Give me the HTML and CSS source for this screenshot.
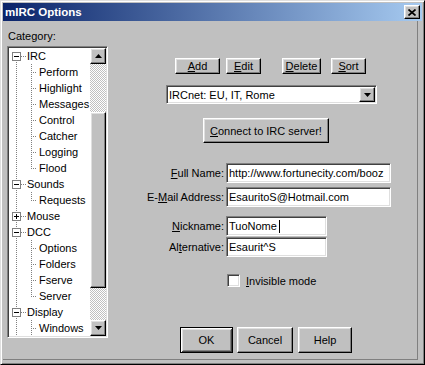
FILE: index.html
```html
<!DOCTYPE html>
<html lang="en">
<head>
    <meta charset="UTF-8">
    <title>mIRC Options</title>
    <link rel="stylesheet" href="styles.css">
</head>
<body>
<div class="window">
    <div class="titlebar">
        <span class="title">mIRC Options</span>
        <span class="close"><svg width="8" height="7" viewBox="0 0 8 7"><path d="M0.5 0.5l7 6M7.5 0.5l-7 6" stroke="#000" stroke-width="1.7"/></svg></span>
    </div>
    <div class="client">
        <div class="left">
            <div class="cat">Category:</div>
            <div class="tree">
                <ul class="nodes">
                    <li class="row root first"><span class="g1"><i class="box"></i></span>IRC</li>
                    <li class="row child"><span class="g1"></span><span class="g2"></span>Perform</li>
                    <li class="row child"><span class="g1"></span><span class="g2"></span>Highlight</li>
                    <li class="row child"><span class="g1"></span><span class="g2"></span>Messages</li>
                    <li class="row child"><span class="g1"></span><span class="g2"></span>Control</li>
                    <li class="row child"><span class="g1"></span><span class="g2"></span>Catcher</li>
                    <li class="row child"><span class="g1"></span><span class="g2"></span>Logging</li>
                    <li class="row child last"><span class="g1"></span><span class="g2"></span>Flood</li>
                    <li class="row root"><span class="g1"><i class="box"></i></span>Sounds</li>
                    <li class="row child last"><span class="g1"></span><span class="g2"></span>Requests</li>
                    <li class="row root"><span class="g1"><i class="box plus"></i></span>Mouse</li>
                    <li class="row root"><span class="g1"><i class="box"></i></span>DCC</li>
                    <li class="row child"><span class="g1"></span><span class="g2"></span>Options</li>
                    <li class="row child"><span class="g1"></span><span class="g2"></span>Folders</li>
                    <li class="row child"><span class="g1"></span><span class="g2"></span>Fserve</li>
                    <li class="row child last"><span class="g1"></span><span class="g2"></span>Server</li>
                    <li class="row root"><span class="g1"><i class="box"></i></span>Display</li>
                    <li class="row child"><span class="g1"></span><span class="g2"></span>Windows</li>
                </ul>
                <div class="vscroll">
                    <span class="sbtn"><svg width="7" height="4" viewBox="0 0 7 4"><path d="M3.5 0L7 4H0z"/></svg></span>
                    <span class="track top"></span>
                    <span class="thumb"></span>
                    <span class="track bottom"></span>
                    <span class="sbtn"><svg width="7" height="4" viewBox="0 0 7 4"><path d="M0 0h7L3.5 4z"/></svg></span>
                </div>
            </div>
        </div>

        <div class="right">
            <div class="btnrow">
                <span class="btn add"><u>A</u>dd</span>
                <span class="btn edit"><u>E</u>dit</span>
                <span class="btn delete"><u>D</u>elete</span>
                <span class="btn sort"><u>S</u>ort</span>
            </div>

            <div class="combo">
                <span class="combo-text">IRCnet: EU, IT, Rome</span>
                <span class="drop"><svg width="7" height="4" viewBox="0 0 7 4"><path d="M0 0h7L3.5 4z"/></svg></span>
            </div>

            <span class="btn connect"><u>C</u>onnect to IRC server!</span>

            <div class="field first">
                <span class="lbl"><u>F</u>ull Name:</span>
                <span class="input wide">http://www.fortunecity.com/booz</span>
            </div>
            <div class="field email">
                <span class="lbl">E-<u>M</u>ail Address:</span>
                <span class="input wide">EsauritoS@Hotmail.com</span>
            </div>
            <div class="field nick">
                <span class="lbl"><u>N</u>ickname:</span>
                <span class="input short">TuoNome<i class="caret"></i></span>
            </div>
            <div class="field alt">
                <span class="lbl">Al<u>t</u>ernative:</span>
                <span class="input short">Esaurit^S</span>
            </div>

            <div class="check">
                <span class="checkbox"></span>
                <span><u>I</u>nvisible mode</span>
            </div>

            <div class="actions">
                <span class="btn ok">OK</span>
                <span class="btn cancel">Cancel</span>
                <span class="btn help">Help</span>
            </div>
        </div>
    </div>
</div>
</body>
</html>
```

FILE: styles.css
```css
* {
    box-sizing: border-box;
}
body {
    margin: 0;
    background: #c0c0c0;
    font-family: "Liberation Sans", Arial, sans-serif;
    font-size: 11px;
    color: #000;
}
u {
    text-decoration: underline;
}

/* window frame */
.window {
    width: 425px;
    height: 365px;
    padding: 2px;
    border: 1px solid;
    border-color: #dfdfdf #000 #000 #dfdfdf;
    box-shadow: inset 1px 1px #fff, inset -1px -1px #808080;
    background: #c0c0c0;
}
.titlebar {
    height: 18px;
    display: flex;
    align-items: center;
    justify-content: space-between;
    padding: 0 2px;
    background: linear-gradient(to right, #0a246a, #a6caf0);
    color: #fff;
    font-weight: bold;
    font-size: 11.5px;
}
.close {
    width: 16px;
    height: 14px;
    display: flex;
    align-items: center;
    justify-content: center;
    background: #c0c0c0;
    border: 1px solid;
    border-color: #fff #000 #000 #fff;
    box-shadow: inset -1px -1px #808080, inset 1px 1px #dfdfdf;
}
.client {
    width: 415px;
    height: 339px;
    display: grid;
    grid-template-columns: 106px 1fr;
    border-right: 1px solid #808080;
    border-bottom: 1px solid #808080;
}

/* raised / sunken */
.btn, .drop, .sbtn, .thumb {
    background: #c0c0c0;
    border: 1px solid;
    border-color: #fff #000 #000 #fff;
    box-shadow: inset -1px -1px #808080, inset 1px 1px #dfdfdf;
}
.btn {
    display: flex;
    align-items: center;
    justify-content: center;
    height: 16px;
}
.input, .combo, .checkbox, .tree {
    background: #fff;
    border: 1px solid;
    border-color: #808080 #fff #fff #808080;
    box-shadow: inset 1px 1px #404040, inset -1px -1px #dfdfdf;
}

/* category tree */
.cat {
    margin: 9px 0 0 5px;
    line-height: 13px;
}
.tree {
    width: 101px;
    height: 292px;
    margin: 3px 0 0 4px;
    padding: 1px;
    display: flex;
}
.nodes {
    flex: 1;
    margin: 0;
    padding: 0;
    list-style: none;
    overflow: hidden;
}
.row {
    height: 16px;
    display: flex;
    align-items: center;
    white-space: nowrap;
}
.g1 {
    width: 18px;
    height: 16px;
    display: flex;
    align-items: center;
    --dv: repeating-linear-gradient(to bottom, #808080 0 1px, transparent 1px 2px);
    --dh: repeating-linear-gradient(to right, #808080 0 1px, transparent 1px 2px);
    background: var(--dv) 7px 0 / 1px 16px no-repeat;
}
.root .g1 {
    background: var(--dh) 12px 8px / 5px 1px no-repeat, var(--dv) 7px 0 / 1px 16px no-repeat;
}
.root.first .g1 {
    background: var(--dh) 12px 8px / 5px 1px no-repeat, var(--dv) 7px 8px / 1px 8px no-repeat;
}
.g2 {
    width: 12px;
    height: 16px;
    --dv: repeating-linear-gradient(to bottom, #808080 0 1px, transparent 1px 2px);
    --dh: repeating-linear-gradient(to right, #808080 0 1px, transparent 1px 2px);
    background: var(--dh) 4px 8px / 6px 1px no-repeat, var(--dv) 4px 0 / 1px 16px no-repeat;
}
.last .g2 {
    background: var(--dh) 4px 8px / 6px 1px no-repeat, var(--dv) 4px 0 / 1px 8px no-repeat;
}
.box {
    width: 9px;
    height: 9px;
    margin-left: 3px;
    border: 1px solid #808080;
    background: linear-gradient(#000, #000) center / 5px 1px no-repeat, #fff;
}
.box.plus {
    background: linear-gradient(#000, #000) center / 5px 1px no-repeat,
                linear-gradient(#000, #000) center / 1px 5px no-repeat, #fff;
}
.vscroll {
    width: 16px;
    display: flex;
    flex-direction: column;
}
.sbtn {
    height: 16px;
    display: flex;
    align-items: center;
    justify-content: center;
}
.track {
    background: repeating-conic-gradient(#fff 0 25%, #c0c0c0 0 50%) 0 0 / 2px 2px;
}
.track.top {
    height: 48px;
}
.thumb {
    height: 176px;
}
.track.bottom {
    height: 32px;
}

/* right side */
.right {
    display: flex;
    flex-direction: column;
    align-items: flex-start;
}
.btnrow {
    display: flex;
    margin: 37px 0 0 66px;
}
.add { width: 45px; }
.edit { width: 35px; margin-left: 6px; }
.delete { width: 39px; margin-left: 21px; }
.sort { width: 35px; margin-left: 10px; }

.combo {
    width: 211px;
    height: 19px;
    margin: 11px 0 0 57px;
    padding: 1px;
    display: flex;
    align-items: center;
}
.combo-text {
    flex: 1;
    padding-left: 1px;
}
.drop {
    width: 16px;
    height: 15px;
    display: flex;
    align-items: center;
    justify-content: center;
}
.connect {
    width: 126px;
    height: 25px;
    margin: 14px 0 0 94px;
}

.field {
    display: flex;
    align-items: center;
}
.field.first { margin-top: 20px; }
.field.email { margin-top: 4px; }
.field.nick { margin-top: 9px; }
.field.alt { margin-top: 1px; }
.lbl {
    width: 115px;
    margin-right: 2px;
    text-align: right;
    white-space: nowrap;
}
.input {
    height: 20px;
    padding: 0 0 0 2px;
    display: flex;
    align-items: center;
    white-space: nowrap;
    overflow: hidden;
}
.input.wide { width: 165px; }
.input.short { width: 101px; }
.caret {
    width: 1px;
    height: 13px;
    margin-left: 2px;
    background: #000;
}

.check {
    display: flex;
    align-items: center;
    margin: 17px 0 0 118px;
}
.checkbox {
    width: 13px;
    height: 13px;
    margin-right: 6px;
}

.actions {
    display: flex;
    margin: 40px 0 0 71px;
}
.actions .btn {
    height: 26px;
}
.ok {
    width: 53px;
    border: 1px solid #000;
    box-shadow: inset 1px 1px #fff, inset -1px -1px #404040, inset 2px 2px #dfdfdf, inset -2px -2px #808080;
}
.cancel { width: 56px; margin-left: 4px; }
.help { width: 54px; margin-left: 5px; }
```
